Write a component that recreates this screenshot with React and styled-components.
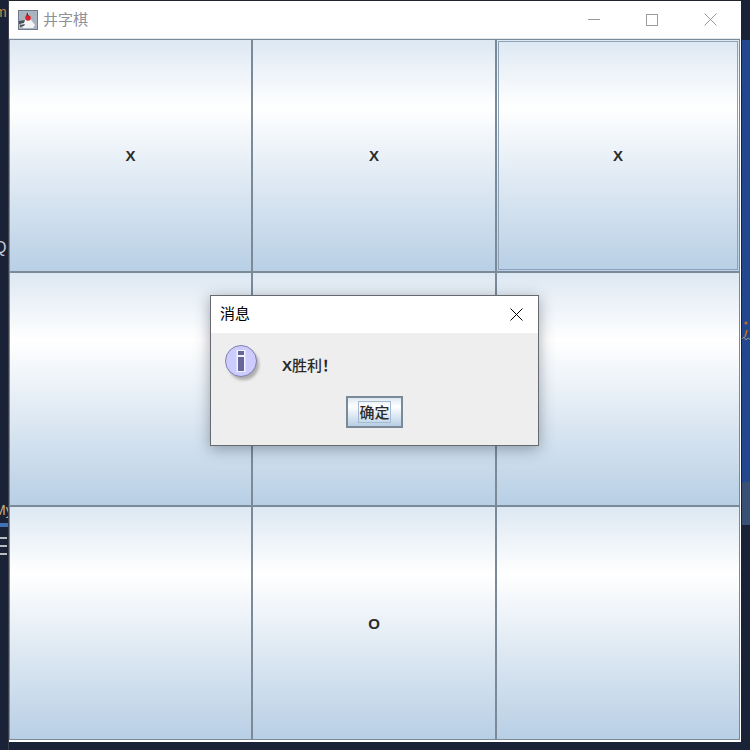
import styled, { createGlobalStyle } from 'styled-components'

const Global = createGlobalStyle`
  html, body { margin: 0; padding: 0; background: #1a2238; }
  * { box-sizing: border-box; }
`

const Desktop = styled.div`
  position: relative;
  width: 750px;
  height: 750px;
  overflow: hidden;
  display: flex;
  background: #1a2238;
  font-family: "Liberation Sans", "Noto Sans CJK SC", sans-serif;
`

const LeftStrip = styled.div`
  width: 9px;
  height: 750px;
  flex: none;
  overflow: hidden;
  display: flex;
  flex-direction: column;
  color: #c9ccd2;
  font-size: 14px;
  line-height: 16px;
  border-right: 1px solid #3a3f4a;
`

const StripText = styled.div`
  height: ${p => p.$h}px;
  flex: none;
  padding-top: ${p => p.$top || 0}px;
  margin-left: ${p => p.$left || 0}px;
  font-size: ${p => p.$size || 14}px;
  white-space: nowrap;
  color: ${p => p.$color || '#c9ccd2'};
`

const StripBlue = styled.div`
  height: 4px;
  flex: none;
  background: #3f73b5;
`

const StripBars = styled.div`
  flex: none;
  width: 7px;
  height: 18px;
  margin-top: 10px;
  border-top: 2px solid #b9bcc2;
  border-bottom: 2px solid #b9bcc2;
  display: flex;
  align-items: center;
  &::before {
    content: "";
    width: 100%;
    height: 2px;
    background: #b9bcc2;
  }
`

const RightStrip = styled.div`
  width: 9px;
  flex: none;
  display: flex;
  flex-direction: column;
  margin-left: 1px;
  overflow: hidden;
`

const StripBlock = styled.div`
  height: ${p => p.$h}px;
  flex: none;
  background: ${p => p.$bg};
  padding-top: ${p => p.$top || 0}px;
  ${p => p.$rule && 'border-top: 9px solid #3a4f74; border-bottom: 2px solid #1a2238;'}
`

const Frame = styled.div`
  width: 732px;
  height: 742px;
  flex: none;
  display: flex;
  flex-direction: column;
  background: #fff;
  border-top: 1px solid #20252f;
`

const TitleBar = styled.div`
  height: 38px;
  flex: none;
  display: flex;
  align-items: center;
  padding-left: 9px;
  color: #8b9099;
  font-size: 15px;
  border-bottom: 1px solid #e4e7ea;
`

const TitleText = styled.span`
  margin-left: 5px;
  margin-top: -2px;
  flex: 1;
  font-family: "Noto Sans CJK SC", sans-serif;
`

const WinButton = styled.button`
  width: 58.5px;
  height: 30px;
  padding: 0;
  border: none;
  background: none;
  display: flex;
  align-items: center;
  justify-content: center;
`

const Controls = styled.div`
  display: flex;
  margin-right: 1px;
`

const Board = styled.div`
  width: 731px;
  height: 701px;
  flex: none;
  display: grid;
  grid-template-columns: 243px 244px 244px;
  grid-template-rows: 233px 234px 234px;
`

const Cell = styled.button`
  padding: 0;
  margin: 0;
  border: 1px solid #7a8a99;
  background: linear-gradient(180deg, #dde8f3 0%, #ffffff 29%, #b8cfe5 100%);
  font-family: "Liberation Sans", sans-serif;
  font-weight: bold;
  font-size: 15px;
  color: #2b2b2b;
  display: flex;
  align-items: center;
  justify-content: center;
  ${p => p.$focused && 'outline: 1px solid #8ca2b8; outline-offset: -3px;'}
`

const Dialog = styled.div`
  position: absolute;
  left: 210px;
  top: 295px;
  width: 329px;
  height: 151px;
  border: 1px solid #666a6e;
  background: #eeeeee;
  box-shadow: 0 3px 14px rgba(30, 40, 55, 0.4);
  display: flex;
  flex-direction: column;
`

const DialogTitle = styled.div`
  height: 37px;
  flex: none;
  background: #fff;
  display: flex;
  align-items: center;
  justify-content: space-between;
  padding: 0 15px 0 9px;
  font-size: 15px;
  color: #000;
  font-family: "Noto Sans CJK SC", sans-serif;
`

const DialogTitleText = styled.span`
  margin-top: -4px;
`

const DialogBody = styled.div`
  flex: 1;
  display: flex;
  flex-direction: column;
  padding: 11px 0 0 14px;
`

const MessageRow = styled.div`
  display: flex;
  align-items: center;
  gap: 21px;
  height: 40px;
`

const Message = styled.span`
  font-size: 15px;
  font-weight: 500;
  color: #2b2b2b;
  font-family: "Liberation Sans", "Noto Sans CJK SC", sans-serif;
`

const MessageMark = styled.b`
  font-weight: bold;
`

const ButtonRow = styled.div`
  display: flex;
  justify-content: center;
  margin: 12px 14px 0 0;
`

const OkButton = styled.button`
  width: 57px;
  height: 32px;
  padding: 0;
  border: 2px solid #7a8a99;
  background: linear-gradient(180deg, #dde8f3 0%, #ffffff 30%, #b8cfe5 100%);
  display: flex;
  align-items: center;
  justify-content: center;
`

const OkLabel = styled.span`
  width: 33px;
  height: 22px;
  border: 1px solid #a3bad0;
  font-size: 15px;
  font-weight: 500;
  line-height: 20px;
  color: #2b2b2b;
  text-align: center;
  white-space: nowrap;
  font-family: "Noto Sans CJK SC", sans-serif;
`

const JavaIcon = () => (
  <svg width="20" height="20" viewBox="0 0 20 20">
    <rect x="0.5" y="0.5" width="19" height="19" fill="#a9b4c0" stroke="#6f7b88" />
    <path d="M10 2 L13 10 L17 15 L15 18 L5 18 L3 14 L7 10 Z" fill="#f3f4f6" />
    <path d="M1 11 L7 10 L6 13 L1 14 Z M2 15 L7 14 L6 16 L2 17 Z" fill="#4a5058" />
    <path d="M9.5 2 L11 6 L8 6 Z" fill="#3c4046" />
    <circle cx="10" cy="8" r="2.8" fill="#d9202a" />
  </svg>
)

const MinIcon = () => (
  <svg width="12" height="12" viewBox="0 0 12 12">
    <path d="M0 5.5 H12" stroke="#9a9a9a" strokeWidth="1" />
  </svg>
)

const MaxIcon = () => (
  <svg width="12" height="12" viewBox="0 0 12 12">
    <rect x="0.5" y="0.5" width="11" height="11" fill="none" stroke="#9a9a9a" />
  </svg>
)

const CloseIcon = ({ color }) => (
  <svg width="13" height="13" viewBox="0 0 13 13">
    <path d="M0.5 0.5 L12.5 12.5 M12.5 0.5 L0.5 12.5" stroke={color} strokeWidth="1" fill="none" />
  </svg>
)

const InfoIcon = () => (
  <svg width="36" height="38" viewBox="0 0 36 38" style={{ flex: 'none' }}>
    <defs>
      <filter id="soft" x="-30%" y="-30%" width="160%" height="160%">
        <feGaussianBlur stdDeviation="1.5" />
      </filter>
    </defs>
    <circle cx="18.5" cy="19.5" r="15.5" fill="#777" opacity="0.55" filter="url(#soft)" />
    <circle cx="16" cy="16" r="15.5" fill="#ccccff" stroke="#8080b0" strokeWidth="1" />
    <rect x="11.5" y="5" width="9" height="22" fill="#f2f2ff" />
    <rect x="13" y="6" width="6" height="4" fill="#66669a" />
    <rect x="13" y="12" width="6" height="14" fill="#66669a" />
  </svg>
)

// the code editor peeking out behind the window
const EditorMark = () => (
  <svg width="9" height="22" viewBox="0 0 9 22" style={{ display: 'block' }}>
    <circle cx="4" cy="2" r="1.5" fill="#c66a24" />
    <path d="M5 9 L3 16" stroke="#c66a24" strokeWidth="1.6" />
    <path d="M0 18 L2 16 L4 19 L6 17 L9 19" stroke="#b9a77a" strokeWidth="0.8" fill="none" />
  </svg>
)

const cells = ['X', 'X', 'X', '', '', '', '', 'O', '']

export default function App() {
  return (
    <Desktop>
      <Global />
      <LeftStrip>
        <StripText $h={240} $top={4} $left={-5} $color="#c98a4a">m</StripText>
        <StripText $h={262} $top={0} $left={-6} $size={16}>Q</StripText>
        <StripText $h={21} $left={-6} $color="#c9b07a">My</StripText>
        <StripBlue />
        <StripBars />
      </LeftStrip>
      <Frame>
        <TitleBar>
          <JavaIcon />
          <TitleText>井字棋</TitleText>
          <Controls>
            <WinButton><MinIcon /></WinButton>
            <WinButton><MaxIcon /></WinButton>
            <WinButton><CloseIcon color="#9a9a9a" /></WinButton>
          </Controls>
        </TitleBar>
        <Board>
          {cells.map((c, i) => (
            <Cell key={i} $focused={i === 2}>{c}</Cell>
          ))}
        </Board>
      </Frame>
      <RightStrip>
        <StripBlock $h={40} $bg="#1a2238" />
        <StripBlock $h={442} $bg="#23478f" $top={281}>
          <EditorMark />
        </StripBlock>
        <StripBlock $h={45} $bg="#3a4f74" $rule />
        <StripBlock $h={223} $bg="#1a2238" />
      </RightStrip>
      <Dialog>
        <DialogTitle>
          <DialogTitleText>消息</DialogTitleText>
          <CloseIcon color="#000" />
        </DialogTitle>
        <DialogBody>
          <MessageRow>
            <InfoIcon />
            <Message><MessageMark>X</MessageMark>胜利<MessageMark>！</MessageMark></Message>
          </MessageRow>
          <ButtonRow>
            <OkButton>
              <OkLabel>确定</OkLabel>
            </OkButton>
          </ButtonRow>
        </DialogBody>
      </Dialog>
    </Desktop>
  )
}
